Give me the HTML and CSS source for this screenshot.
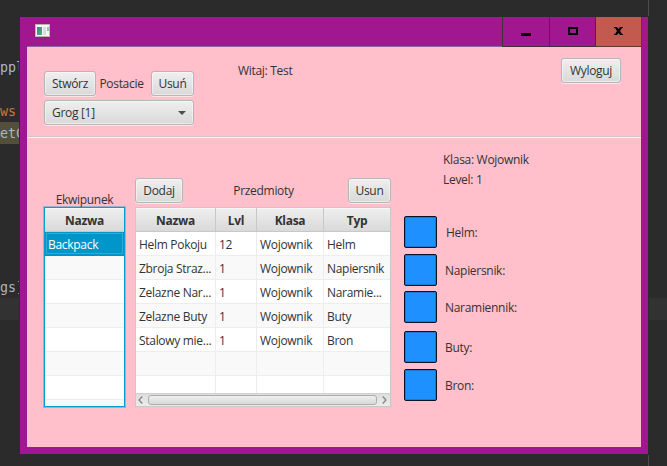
FILE: index.html
```html
<!DOCTYPE html>
<html lang="pl">
<head>
<meta charset="utf-8">
<title>Postacie</title>
<link rel="stylesheet" href="styles.css">
</head>
<body>
<div class="editor">
  <div class="line"></div>
  <div class="line"></div>
  <div class="line">ppl</div>
  <div class="line"></div>
  <div class="line keyword">ws</div>
  <div class="line"><span class="mark">etC</span></div>
  <div class="line"></div>
  <div class="line"></div>
  <div class="line"></div>
  <div class="line"></div>
  <div class="line"></div>
  <div class="line"></div>
  <div class="line">gs]</div>
  <div class="line current"></div>
</div>
<div class="margin-guide"></div>
<div class="window">
  <header class="titlebar">
    <svg class="app-icon" width="15" height="13" viewBox="0 0 15 13">
      <defs><linearGradient id="g" x1="0" y1="0" x2="1" y2="1"><stop offset="0" stop-color="#4777a4"/><stop offset="1" stop-color="#57b377"/></linearGradient></defs>
      <rect width="15" height="13" fill="#b9b4ad"/>
      <rect x="1" y="1" width="13" height="11" fill="#f7f7f5"/>
      <rect x="2" y="3" width="5" height="8" fill="url(#g)"/>
      <rect x="8" y="3" width="3" height="8" fill="#dcdcdc"/>
      <rect x="12" y="3" width="2" height="4" fill="#8ec9b0"/>
    </svg>
    <div class="controls">
      <div class="control min"><svg width="10" height="9"><rect y="6" width="10" height="3"/></svg></div>
      <div class="control max"><svg width="10" height="8"><path fill-rule="evenodd" d="M0 0H10V8H0ZM2 2V6H8V2Z"/></svg></div>
      <div class="control close"><svg width="9" height="8" viewBox="0 0 9 8"><path d="M0 0H3L4.500 2L6 0H9V1H8L6 4L8 7H9V8H6L4.500 6L3 8H0V7H1L3 4L1 1H0Z"/></svg></div>
    </div>
  </header>
  <main class="client">
    <section class="top">
      <div class="characters">
        <div class="bar">
          <button class="btn create">Stwórz</button>
          <span class="title">Postacie</span>
          <button class="btn remove">Usuń</button>
        </div>
        <div class="combo">Grog [1]<i class="arrow"></i></div>
      </div>
      <span class="welcome">Witaj: Test</span>
      <button class="btn logout">Wyloguj</button>
    </section>
    <section class="bottom">
      <div class="equipment">
        <div class="caption">Ekwipunek</div>
        <div class="table focused">
          <div class="row head"><b>Nazwa</b></div>
          <div class="row selected"><span>Backpack</span></div>
          <div class="row odd"></div>
          <div class="row"></div>
          <div class="row odd"></div>
          <div class="row"></div>
          <div class="row odd"></div>
          <div class="row"></div>
          <div class="row odd"></div>
        </div>
      </div>
      <div class="items">
        <div class="bar">
          <button class="btn add">Dodaj</button>
          <span class="title">Przedmioty</span>
          <button class="btn remove">Usun</button>
        </div>
        <div class="table">
          <div class="rows">
            <div class="row head"><b>Nazwa</b><b>Lvl</b><b>Klasa</b><b>Typ</b></div>
            <div class="row"><span>Helm Pokoju</span><span>12</span><span>Wojownik</span><span>Helm</span></div>
            <div class="row odd"><span>Zbroja Straz...</span><span>1</span><span>Wojownik</span><span>Napiersnik</span></div>
            <div class="row"><span>Zelazne Nar...</span><span>1</span><span>Wojownik</span><span>Naramie...</span></div>
            <div class="row odd"><span>Zelazne Buty</span><span>1</span><span>Wojownik</span><span>Buty</span></div>
            <div class="row"><span>Stalowy mie...</span><span>1</span><span>Wojownik</span><span>Bron</span></div>
            <div class="row odd"><span></span><span></span><span></span><span></span></div>
            <div class="row"><span></span><span></span><span></span><span></span></div>
          </div>
          <div class="scrollbar">
            <svg width="5" height="8" viewBox="0 0 5 8"><path d="M4.300 .5L1 4L4.300 7.500"/></svg>
            <div class="thumb"></div>
            <svg width="5" height="8" viewBox="0 0 5 8"><path d="M.7 .5L4 4L.7 7.500"/></svg>
          </div>
        </div>
      </div>
      <div class="details">
        <div class="stat">Klasa: Wojownik</div>
        <div class="stat">Level: 1</div>
        <div class="slots">
          <div class="slot helm"><i></i><span>Helm:</span></div>
          <div class="slot"><i></i><span>Napiersnik:</span></div>
          <div class="slot shoulder"><i></i><span>Naramiennik:</span></div>
          <div class="slot boots"><i></i><span>Buty:</span></div>
          <div class="slot"><i></i><span>Bron:</span></div>
        </div>
      </div>
    </section>
  </main>
</div>
</body>
</html>
```
FILE: styles.css
```css
* { box-sizing: border-box; }
body {
  margin: 0;
  width: 667px;
  height: 466px;
  overflow: hidden;
  position: relative;
  background: #2b2b2b;
  color: #333;
  font: 12px/16px "Open Sans", "Noto Sans", sans-serif;
  letter-spacing: -0.3px;
}
.editor {
  padding-top: 12px;
  font: 13.3px/24px "DejaVu Sans Mono", monospace;
  letter-spacing: 0;
  color: #a9b7c6;
}
.line { height: 22px; }
.keyword { color: #cc7832; }
.mark { display: block; width: 26px; height: 22px; background: #52503a; }
.current { background: #323232; }
.margin-guide { position: absolute; left: 648px; top: 0; width: 1px; height: 466px; background: #4d4d4d; }

.window {
  position: absolute;
  left: 20px;
  top: 17px;
  width: 628px;
  height: 437px;
  padding: 0 7px 7px;
  background: #a0178f;
  outline: 1px solid #2b2b2b;
}
.titlebar { height: 30px; display: flex; justify-content: space-between; border-bottom: 1px solid #9064a0; }
.app-icon { margin: 7px 0 0 8px; }
.controls { display: flex; height: 30px; margin-right: -1px; }
.control {
  width: 46px;
  border: 1px solid #40303c;
  border-left: 0;
  border-top: 0;
  display: flex;
  align-items: center;
  justify-content: center;
}
.min { width: 48px; border-left: 1px solid #40303c; }
.max svg { margin-bottom: 1px; }
.close { background: #c25a50; border-color: #603838; }
.close svg { margin-bottom: 1px; }

.client { height: 400px; background: #ffc0cb; }
.top {
  height: 91px;
  display: flex;
  align-items: flex-start;
  padding: 11px 20px 0 17px;
  border-bottom: 1px solid #f5f2f2;
  box-shadow: inset 0 -1px #cacaca;
}
.btn, .combo {
  height: 25px;
  padding: 1px 0 0;
  border: 1px solid #b6b6b6;
  border-radius: 3px;
  background: linear-gradient(#efefef, #d9d9d9);
  box-shadow: inset 0 0 0 1px rgba(255, 255, 255, .45), 0 1px rgba(255, 255, 255, .55);
  font: inherit;
  letter-spacing: inherit;
  color: #333;
}
.characters { width: 150px; margin-top: 13px; }
.bar { display: flex; align-items: center; justify-content: space-between; }
.create { width: 52px; }
.characters .title { margin-right: 4px; }
.characters .remove { width: 43px; }
.combo {
  margin-top: 4px;
  display: flex;
  align-items: center;
  justify-content: space-between;
  padding: 1px 7px 0;
}
.arrow { border: 4px solid transparent; border-top-color: #4d4d4d; border-bottom: 0; }
.welcome { margin: 5px 0 0 44px; }
.logout { width: 60px; margin-left: auto; }

.bottom { display: flex; padding-left: 17px; }
.equipment { width: 81px; margin-top: 53px; }
.caption { height: 16px; line-height: 18px; text-align: center; }
.title { padding-top: 1px; }
.table { height: 200px; overflow: hidden; border: 1px solid #c8c8c8; background: #fff; }
.focused { border-color: #039ed3; box-shadow: 0 0 0 1px rgba(3, 158, 211, .4); }
.row { height: 24px; border-bottom: 1px solid #ededed; display: grid; }
.row > * { display: flex; align-items: center; padding: 2px 0 0 3px; white-space: nowrap; border-right: 1px solid #ededed; }
.row > :last-child { border-right: 0; }
.odd { background: #f9f9f9; }
.head { background: linear-gradient(#efefef, #d9d9d9); border-bottom-color: #c8c8c8; box-shadow: inset 0 1px #f7f7f7; }
.head > * { justify-content: center; padding: 2px 0 0; border-color: #c8c8c8; }
.selected { background: #0096c9; color: #fff; border-color: #0090c1; box-shadow: inset 0 0 0 1px #0096c9, inset 0 0 0 2px #30abd5; }
.items { width: 256px; margin: 40px 0 0 10px; }
.items .bar { margin-bottom: 4px; }
.items .row { grid-template-columns: 80px 41px 67px 1fr; }
.rows { height: 185px; overflow: hidden; }
.add { width: 48px; }
.items .title { margin-left: 5px; margin-right: 9px; }
.items .remove { width: 43px; }
.scrollbar {
  height: 13px;
  display: flex;
  align-items: center;
  gap: 5px;
  padding: 0 3px 0 2px;
  border-top: 1px solid #d0d0d0;
  background: linear-gradient(#dedede, #ececec);
}
.scrollbar path { fill: none; stroke: #858585; stroke-width: 1.3; }
.thumb { flex: 1; height: 10px; border: 1px solid #adadad; border-radius: 3px; background: linear-gradient(#efefef, #d9d9d9); }

.details { margin: 11px 0 0 13px; }
.stat { height: 20px; line-height: 21px; padding-left: 39px; }
.slots { margin-top: 27px; }
.slot { height: 32px; margin-top: 6px; display: flex; align-items: center; gap: 8px; }
.slot span { padding-top: 2px; }
.slot i { width: 33px; height: 32px; border: 1px solid #0a1420; border-radius: 2px; background: #1e90ff; box-shadow: inset 0 0 0 1px #1c79d4; }
.helm { margin-top: 0; gap: 9px; }
.shoulder { margin-top: 5px; }
.boots { margin-top: 8px; }
```
